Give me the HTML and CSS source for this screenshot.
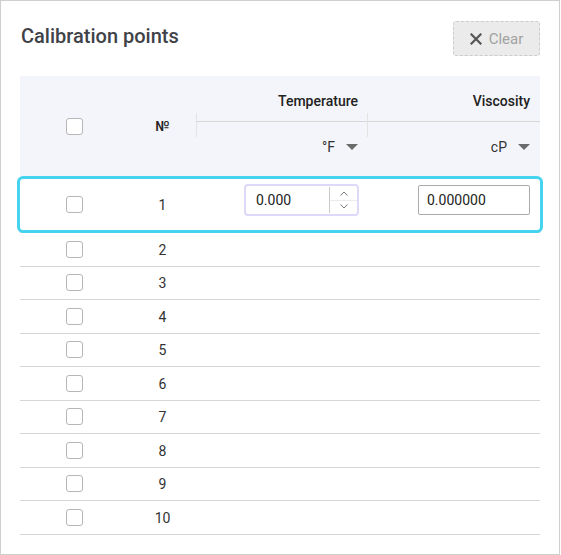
FILE: index.html
```html
<!DOCTYPE html>
<html>
<head>
<meta charset="utf-8">
<link rel="stylesheet" href="styles.css">
</head>
<body>
<div class="panel">
  <div class="top">
    <h1 class="title">Calibration points</h1>
    <button class="clear" type="button">
      <svg class="clear-icon" width="12" height="12" viewBox="0 0 12 12"><path d="M1.5 1.5 L10.5 10.5 M10.5 1.5 L1.5 10.5" stroke="#555" stroke-width="2.2" stroke-linecap="square" fill="none"/></svg>
      <span>Clear</span>
    </button>
  </div>
  <div class="table">
    <div class="thead">
      <div class="th th-check"><span class="cb"></span></div>
      <div class="th th-num">№</div>
      <div class="th th-group th-temp">Temperature</div>
      <div class="th th-group th-visc">Viscosity</div>
      <div class="th th-unit th-unit-temp"><span>°F</span><span class="caret"></span></div>
      <div class="th th-unit th-unit-visc"><span>cP</span><span class="caret"></span></div>
    </div>
    <div class="row row-active">
      <div class="cell-check"><span class="cb"></span></div>
      <div class="cell-num">1</div>
      <div class="cell-temp">
        <div class="temp-input">
          <span class="temp-value">0.000</span>
          <span class="spin">
            <span class="spin-btn spin-up"><svg width="8" height="5" viewBox="0 0 8 5"><polyline points="0.5,4.5 4,1 7.5,4.5" fill="none" stroke="#777" stroke-width="1"/></svg></span>
            <span class="spin-btn spin-down"><svg width="8" height="5" viewBox="0 0 8 5"><polyline points="0.5,0.5 4,4 7.5,0.5" fill="none" stroke="#777" stroke-width="1"/></svg></span>
          </span>
        </div>
      </div>
      <div class="cell-visc">
        <div class="visc-input">0.000000</div>
      </div>
    </div>
    <div class="row"><div class="cell-check"><span class="cb"></span></div><div class="cell-num">2</div><div></div><div></div></div>
    <div class="row"><div class="cell-check"><span class="cb"></span></div><div class="cell-num">3</div><div></div><div></div></div>
    <div class="row"><div class="cell-check"><span class="cb"></span></div><div class="cell-num">4</div><div></div><div></div></div>
    <div class="row"><div class="cell-check"><span class="cb"></span></div><div class="cell-num">5</div><div></div><div></div></div>
    <div class="row"><div class="cell-check"><span class="cb"></span></div><div class="cell-num">6</div><div></div><div></div></div>
    <div class="row"><div class="cell-check"><span class="cb"></span></div><div class="cell-num">7</div><div></div><div></div></div>
    <div class="row"><div class="cell-check"><span class="cb"></span></div><div class="cell-num">8</div><div></div><div></div></div>
    <div class="row"><div class="cell-check"><span class="cb"></span></div><div class="cell-num">9</div><div></div><div></div></div>
    <div class="row"><div class="cell-check"><span class="cb"></span></div><div class="cell-num">10</div><div></div><div></div></div>
  </div>
</div>
</body>
</html>
```
FILE: styles.css
```css
html, body {
  margin: 0;
  padding: 0;
  background: #fff;
}
body {
  font-family: Roboto, "Liberation Sans", sans-serif;
}
.panel {
  width: 560px;
  height: 555px;
  box-sizing: border-box;
  border: 1px solid #cfcfcf;
  padding: 20px 19px;
  background: #fff;
}
.top {
  display: flex;
  justify-content: space-between;
  align-items: flex-start;
  height: 35px;
  margin-bottom: 20px;
}
.title {
  margin: 3px 0 0 1px;
  font-size: 20px;
  font-weight: 500;
  line-height: 24px;
  color: #3f4248;
}
.clear {
  width: 87px;
  height: 35px;
  box-sizing: border-box;
  border: 1px dashed #cccccc;
  border-radius: 3px;
  background: #ebebeb;
  display: flex;
  align-items: center;
  justify-content: center;
  gap: 7px;
  padding: 0;
  font-family: Roboto, "Liberation Sans", sans-serif;
  font-size: 15px;
  color: #a2a2a2;
}
.clear-icon {
  display: block;
}
.cb {
  display: block;
  width: 17px;
  height: 17px;
  box-sizing: border-box;
  border: 1px solid #b7b7b7;
  border-radius: 3px;
  background: #fff;
}
.thead {
  display: grid;
  grid-template-columns: 109px 67px 171px 173px;
  grid-template-rows: 46px 54px;
  background: #f4f5fa;
  font-size: 14px;
  line-height: 20px;
}
.th-check,
.th-num {
  grid-row: 1 / 3;
  display: flex;
  align-items: center;
  justify-content: center;
}
.th-num {
  font-weight: 500;
  color: #222;
}
.th-group {
  position: relative;
  box-sizing: border-box;
  padding: 15px 9px 0 0;
  text-align: right;
  font-weight: 500;
  color: #222;
  border-bottom: 1px solid #d6d6d6;
}
.th-visc {
  padding-right: 10px;
}
.th-group::before {
  content: "";
  position: absolute;
  left: 0;
  top: 37px;
  width: 1px;
  height: 24px;
  background: #e3e3e3;
}
.th-unit {
  display: flex;
  justify-content: flex-end;
  align-items: flex-start;
  gap: 11px;
  padding: 15px 9px 0 0;
  color: #333;
}
.th-unit-visc {
  padding-right: 10px;
}
.caret {
  display: block;
  width: 0;
  height: 0;
  margin-top: 7px;
  border-left: 6px solid transparent;
  border-right: 6px solid transparent;
  border-top: 6px solid #6b6b6b;
}
.row {
  display: grid;
  grid-template-columns: 109px 67px 171px 173px;
  height: 33.5px;
  box-sizing: border-box;
  border-bottom: 1px solid #d6d6d6;
  align-items: center;
  font-size: 14px;
  line-height: 20px;
  color: #333;
}
.cell-check {
  display: flex;
  justify-content: center;
}
.cell-num {
  text-align: center;
  padding-top: 1px;
}
.row-active {
  position: relative;
  height: 57px;
}
.row-active::after {
  content: "";
  position: absolute;
  left: -3px;
  right: -3px;
  top: 0;
  bottom: -1px;
  border: 3px solid #45d3ef;
  border-radius: 6px;
  pointer-events: none;
}
.cell-temp {
  align-self: start;
  display: flex;
  justify-content: flex-end;
  padding: 8px 8px 0 0;
}
.temp-input {
  width: 115px;
  height: 32px;
  box-sizing: border-box;
  border: 2px solid #dcdaf8;
  border-radius: 4px;
  background: #fff;
  display: flex;
}
.temp-value {
  flex: 1;
  padding-left: 10px;
  line-height: 28px;
  color: #222;
}
.spin {
  width: 27px;
  margin: 1px 0;
  border-left: 1px solid #c9c9c9;
  display: flex;
  flex-direction: column;
}
.spin-btn {
  flex: 1;
  display: flex;
  align-items: center;
  justify-content: center;
}
.spin-up {
  border-bottom: 1px solid #ececec;
}
.spin-btn svg {
  display: block;
}
.cell-visc {
  align-self: start;
  display: flex;
  justify-content: flex-end;
  padding: 9px 10px 0 0;
}
.visc-input {
  width: 112px;
  height: 30px;
  box-sizing: border-box;
  border: 1px solid #ababab;
  border-radius: 2px;
  padding-left: 8px;
  line-height: 28px;
  color: #222;
  background: #fff;
}
```
